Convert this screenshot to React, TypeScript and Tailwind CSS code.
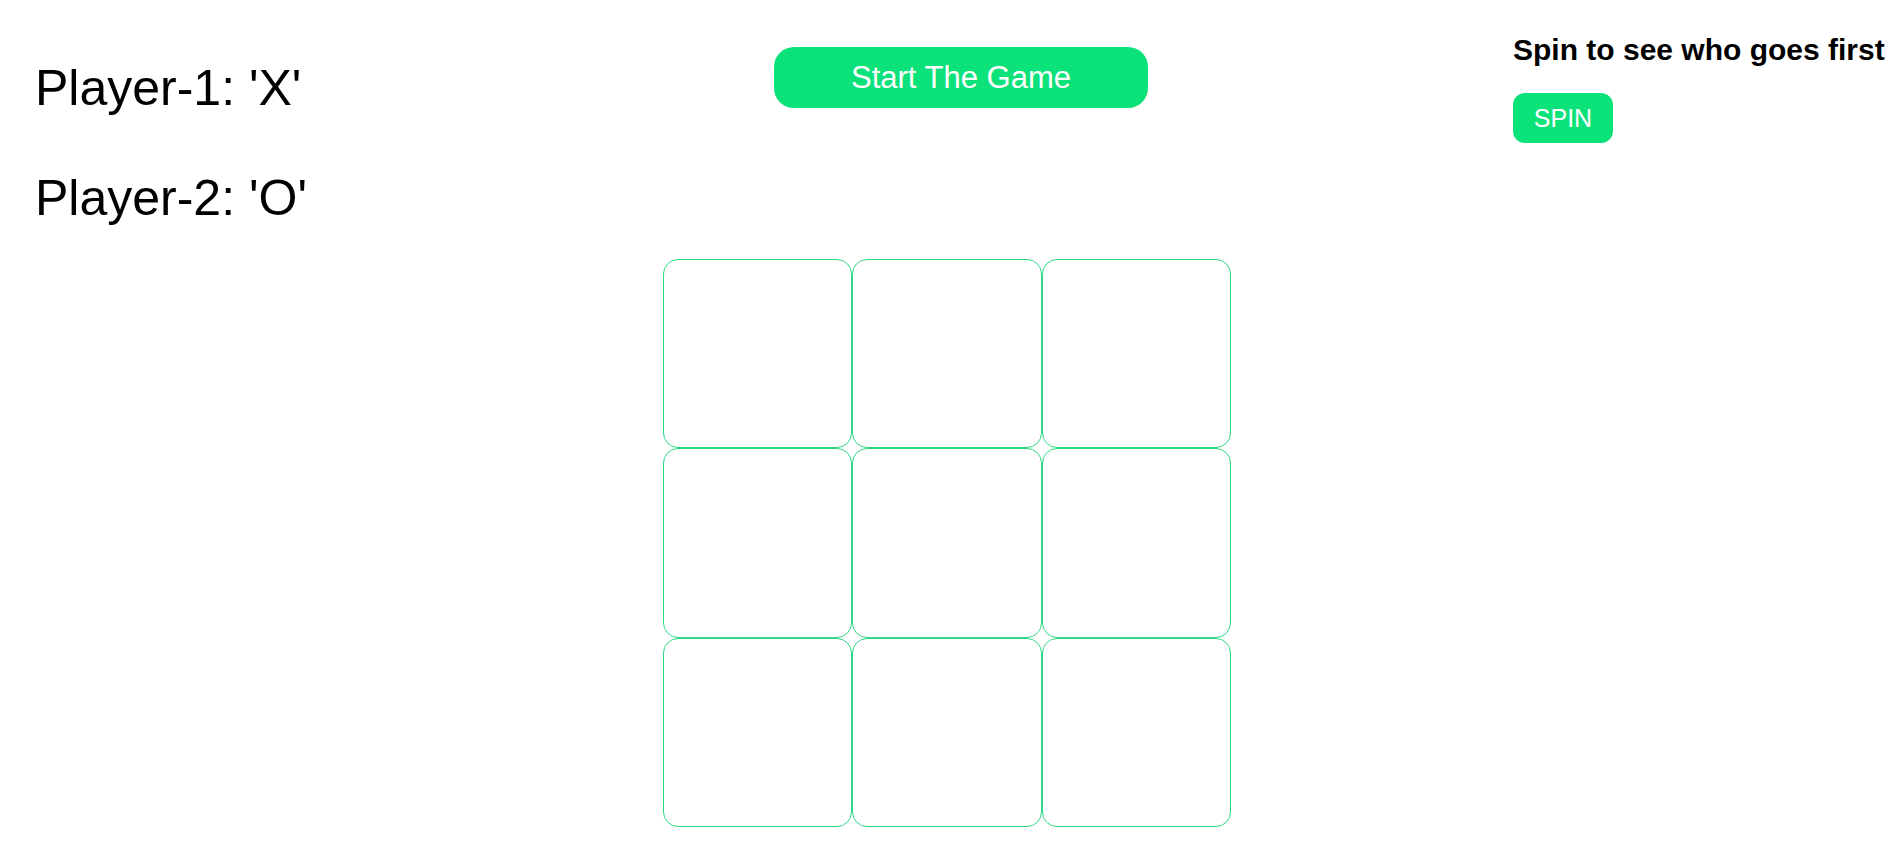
import React from "react";

export default function App() {
  const cells = Array.from({ length: 9 });
  return (
    <div className="w-full h-[865px] bg-white text-black font-['Liberation_Sans',Arial,sans-serif] overflow-hidden">
      <div className="flex items-start">
        <div className="w-[774px] shrink-0 pl-[35px] pt-[60px] flex flex-col gap-[54px]">
          <div className="text-[50px] leading-[56px]">Player-1: 'X'</div>
          <div className="text-[50px] leading-[56px]">Player-2: 'O'</div>
        </div>
        <button className="mt-[47px] w-[374px] h-[61px] shrink-0 rounded-[20px] bg-[#0ce27a] text-white text-[31px] leading-none">
          Start The Game
        </button>
        <div className="ml-[365px] pt-[34px] flex flex-col items-start">
          <h2 className="text-[30px] leading-[32px] font-bold whitespace-nowrap">Spin to see who goes first</h2>
          <button className="mt-[27px] w-[100px] h-[50px] rounded-[12px] bg-[#0ce27a] text-white text-[25px] leading-none">
            SPIN
          </button>
        </div>
      </div>
      <div className="ml-[663px] mt-[33px] grid grid-cols-[repeat(3,189.33px)] grid-rows-[repeat(3,189.33px)] w-[568px]">
        {cells.map((_, i) => (
          <div key={i} className="border border-[#2fd885] rounded-[15px] bg-white" />
        ))}
      </div>
    </div>
  );
}
